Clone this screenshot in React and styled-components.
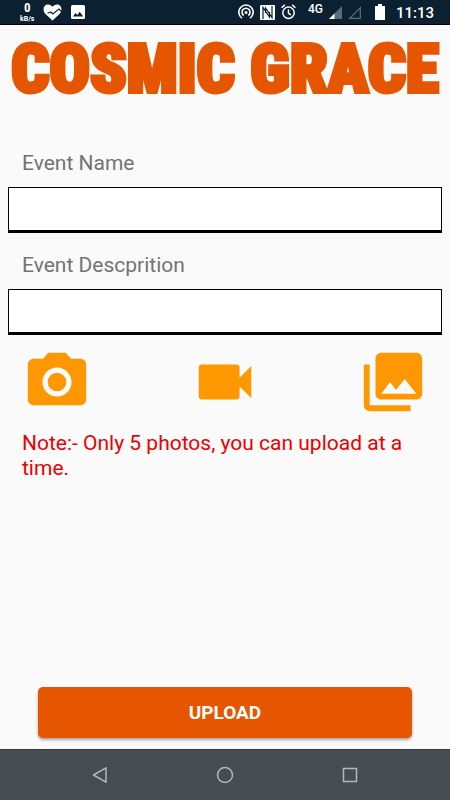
import styled, { createGlobalStyle } from "styled-components";
import { MdPhotoCamera, MdVideocam, MdPhotoLibrary } from "react-icons/md";

const GlobalStyle = createGlobalStyle`
  * {
    box-sizing: border-box;
  }

  body {
    margin: 0;
    background-color: #fafafa;
    font-family: Roboto, "Liberation Sans", sans-serif;
  }
`;

const Screen = styled.div`
  min-height: 100vh;
  display: flex;
  flex-direction: column;
`;

const StatusBar = styled.header`
  height: 25px;
  padding: 0 16px 0 20px;
  display: flex;
  align-items: center;
  justify-content: space-between;
  color: white;
  background-color: #0b2031;
  border-bottom: 1px solid black;
`;

const StatusGroup = styled.div`
  display: flex;
  align-items: center;
  gap: ${(props) => props.$gap}px;
`;

const Speed = styled.div`
  display: flex;
  flex-direction: column;
  align-items: center;
  font-size: 7px;
  font-weight: bold;
  line-height: 8px;
`;

const SpeedValue = styled.span`
  font-family: "Roboto Condensed", Roboto, sans-serif;
  font-size: 13px;
  line-height: 14px;
`;

const Network = styled.span`
  font-size: 12px;
  font-weight: 500;
  line-height: 12px;
  padding: 0 0 6px 6px;
`;

const Battery = styled.svg`
  margin: 0 5px 0 8px;
`;

const Clock = styled.time`
  font-size: 15px;
  font-weight: 500;
  padding-top: 2px;
`;

const Title = styled.h1`
  margin: 0;
  padding-top: 9px;
  color: #e65500;
  font-family: Impact, "Roboto Condensed", Roboto, sans-serif;
  font-size: 67px;
  font-weight: 900;
  line-height: 70px;
  text-align: center;
  white-space: nowrap;
  -webkit-text-stroke: 4px #e65500;
`;

const Form = styled.form`
  flex: 1;
  display: flex;
  flex-direction: column;
  padding: 27px 8px 11px;
`;

const Label = styled.label`
  padding: 20px 14px 12px;
  color: #737373;
  font-size: 21px;
  line-height: 24px;
`;

const Input = styled.input`
  width: 100%;
  height: 46px;
  padding: 0 14px;
  font: inherit;
  font-size: 21px;
  background-color: white;
  border: 1px solid black;
  border-bottom-width: 3px;
  border-radius: 0;
  outline: none;
`;

const MediaRow = styled.div`
  display: flex;
  justify-content: space-between;
  padding: 12px 14px 14px;
`;

const MediaButton = styled.button`
  display: flex;
  padding: 0;
  border: none;
  background: none;
  color: #ff9800;
  font-size: 70px;
  cursor: pointer;
`;

const Note = styled.p`
  margin: 0;
  padding: 0 14px;
  color: #ec0000;
  font-size: 21px;
  line-height: 25px;
`;

const Submit = styled.button`
  height: 51px;
  margin: auto 30px 0;
  color: white;
  background-color: #e65500;
  font-family: inherit;
  font-size: 19px;
  font-weight: bold;
  border: none;
  border-radius: 5px;
  box-shadow: 0 2px 3px rgba(0, 0, 0, 0.35);
  cursor: pointer;
`;

const NavBar = styled.nav`
  height: 51px;
  display: flex;
  align-items: center;
  justify-content: center;
  gap: 101px;
  background-color: #464d52;
  border-top: 1px solid #33383c;
`;

const NavButton = styled.button`
  display: flex;
  padding: 0;
  border: none;
  background: none;
  color: #b4b8ba;
  cursor: pointer;
`;

const HeartIcon = () => (
  <svg width="19" height="17" viewBox="0 0 19 17">
    <path
      d="M9.500 16.500 2.500 10C-1 6 .5.5 5 .5c2 0 3.500 1 4.500 2.300C10.500 1.500 12 .5 14 .5c4.500 0 6 5.500 2.500 9.500z"
      fill="white"
    />
    <path d="M4.500 9.300l3.300-1.300 2 2 6.200-5 3 3" fill="none" stroke="#0b2031" strokeWidth="1.200" />
    <path d="M6.500 10.500l3 3.500 7-6.500" fill="none" stroke="white" strokeWidth="2" />
  </svg>
);

const PictureIcon = () => (
  <svg width="14" height="14" viewBox="0 0 14 14">
    <rect width="14" height="14" rx="1.500" fill="white" />
    <path d="M2 11.500l2.500-3.500 1.800 2 2.400-3.200 3.500 4.700z" fill="#0b2031" />
  </svg>
);

const HotspotIcon = () => (
  <svg width="16" height="16" viewBox="0 0 16 16" fill="none" stroke="white" strokeWidth="1.600">
    <path d="M4 14.200a7.200 7.200 0 1 1 8 0" />
    <path d="M5.700 11.500a4 4 0 1 1 4.600 0" />
    <circle cx="8" cy="8.500" r="1.500" fill="white" stroke="none" />
  </svg>
);

const NfcIcon = () => (
  <svg width="15" height="15" viewBox="0 0 15 15">
    <rect width="15" height="15" rx="1" fill="white" />
    <path
      d="M3 14V2.500l6.500 9.500V7M12 1v11.500L5.500 3v5"
      fill="none"
      stroke="#0b2031"
      strokeWidth="1.200"
    />
  </svg>
);

const AlarmIcon = () => (
  <svg width="15" height="16" viewBox="0 0 15 16" fill="none" stroke="white" strokeWidth="1.500">
    <circle cx="7.500" cy="8.800" r="5.700" />
    <path d="M7.500 5.500v3.800l2.500 1.500M.6 3.700l3.200-2.800M14.400 3.700l-3.200-2.800" />
  </svg>
);

const SignalIcon = () => (
  <svg width="13" height="13" viewBox="0 0 13 13">
    <path d="M13 0v13H0z" fill="#5d6b77" />
    <path d="M5.500 7.500V13H0z" fill="white" />
  </svg>
);

const EmptySignalIcon = () => (
  <svg width="13" height="13" viewBox="0 0 13 13">
    <path d="M12.300 1.700v10.600H1.700z" fill="none" stroke="#5d6b77" strokeWidth="1.300" />
  </svg>
);

const App = () => {
  return (
    <Screen>
      <GlobalStyle />
      <StatusBar>
        <StatusGroup $gap={9}>
          <Speed>
            <SpeedValue>0</SpeedValue>
            <span>kB/s</span>
          </Speed>
          <HeartIcon />
          <PictureIcon />
        </StatusGroup>
        <StatusGroup $gap={6}>
          <HotspotIcon />
          <NfcIcon />
          <AlarmIcon />
          <Network>4G</Network>
          <SignalIcon />
          <EmptySignalIcon />
          <Battery width="10" height="16" viewBox="0 0 10 16">
            <path d="M3 0h4v2h3v14H0V2h3z" fill="white" />
          </Battery>
          <Clock>11:13</Clock>
        </StatusGroup>
      </StatusBar>
      <Title>COSMIC GRACE</Title>
      <Form onSubmit={(e) => e.preventDefault()}>
        <Label htmlFor="name">Event Name</Label>
        <Input id="name" type="text" />
        <Label htmlFor="description">Event Descprition</Label>
        <Input id="description" type="text" />
        <MediaRow>
          <MediaButton type="button" aria-label="Take photo">
            <MdPhotoCamera />
          </MediaButton>
          <MediaButton type="button" aria-label="Record video">
            <MdVideocam />
          </MediaButton>
          <MediaButton type="button" aria-label="Choose from gallery">
            <MdPhotoLibrary />
          </MediaButton>
        </MediaRow>
        <Note>Note:- Only 5 photos, you can upload at a time.</Note>
        <Submit type="submit">UPLOAD</Submit>
      </Form>
      <NavBar>
        <NavButton aria-label="Back">
          <svg width="24" height="24" viewBox="0 0 24 24" fill="none" stroke="currentColor" strokeWidth="1.500">
            <path d="M18 4.800v14.400L5.500 12z" strokeLinejoin="round" />
          </svg>
        </NavButton>
        <NavButton aria-label="Home">
          <svg width="24" height="24" viewBox="0 0 24 24" fill="none" stroke="currentColor" strokeWidth="1.500">
            <circle cx="12" cy="12" r="7.500" />
          </svg>
        </NavButton>
        <NavButton aria-label="Recent apps">
          <svg width="24" height="24" viewBox="0 0 24 24" fill="none" stroke="currentColor" strokeWidth="1.500">
            <rect x="5.500" y="5.500" width="13" height="13" />
          </svg>
        </NavButton>
      </NavBar>
    </Screen>
  );
};

export default App;
